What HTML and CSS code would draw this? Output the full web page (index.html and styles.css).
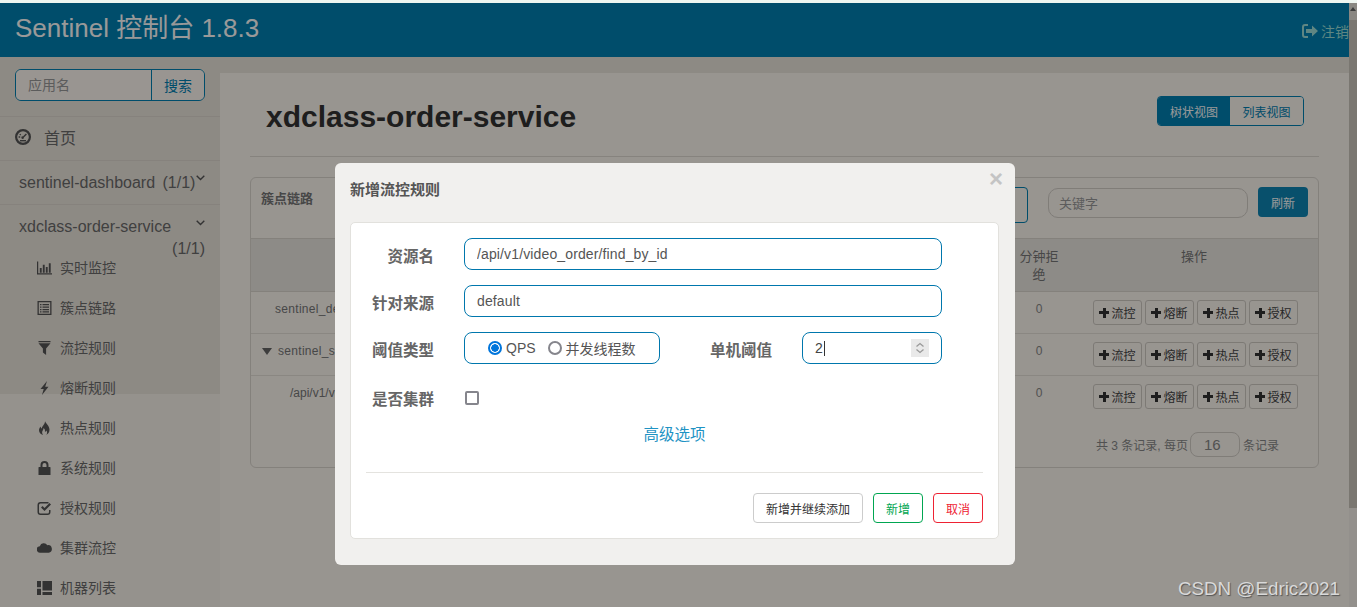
FILE: index.html
```html
<!DOCTYPE html>
<html>
<head>
<meta charset="utf-8">
<title>Sentinel 控制台</title>
<link rel="stylesheet" href="styles.css">
</head>
<body>
<div class="screen">
  <div class="page">
    <header class="topbar">
      <span class="brand">Sentinel 控制台 1.8.3</span>
      <span class="logout">
        <svg class="logout-icon" viewBox="0 0 16 14"><path d="M6 0H3a3 3 0 0 0-3 3v8a3 3 0 0 0 3 3h3v-2H3a1 1 0 0 1-1-1V3a1 1 0 0 1 1-1h3z"/><path d="M4 5h6V1.500L16 7l-6 5.500V9H4z"/></svg>
        注销
      </span>
    </header>

    <div class="layout">
      <aside class="sidebar">
        <div class="search">
          <input class="search-input" type="text" placeholder="应用名">
          <button class="search-btn">搜索</button>
        </div>
        <div class="side-home">
          <svg class="home-icon" viewBox="0 0 16 16"><path fill-rule="evenodd" d="M8 0a8 8 0 1 1 0 16A8 8 0 0 1 8 0zm0 2.200a5.800 5.800 0 1 0 0 11.600A5.800 5.800 0 0 0 8 2.200z"/><path d="M3.600 7.300h1.600v1.400H3.600zM5.200 4.700l1 .9-.9 1-1-.9zM10.900 4.400l1 1-3 3a1.300 1.300 0 1 1-1-1z"/><path d="M5 11h6v1.400H5z"/></svg>
          首页
        </div>
        <div class="side-app">
          <span class="side-app-wide">sentinel-dashboard (1/1)</span>
          <svg class="chev chev-up" viewBox="0 0 9 6"><path d="M.7.700 4.500 4.500 8.300.7"/></svg>
        </div>
        <div class="side-app side-app-open">
          <div class="side-app-name">
            <span>xdclass-order-service</span>
            <svg class="chev" viewBox="0 0 9 6"><path d="M.7.700 4.500 4.500 8.300.7"/></svg>
          </div>
          <div class="side-app-count">(1/1)</div>
        </div>
        <ul class="side-nav">
          <li><svg viewBox="0 0 16 14"><path d="M0 0h1.300v12.700H16V14H0zM3 7h2v5H3zM6.200 3.500h2V12h-2zM9.400 6h2v6h-2zM12.600 2h2v10h-2z"/></svg>实时监控</li>
          <li><svg viewBox="0 0 14 14"><path fill-rule="evenodd" d="M0 0h14v14H0zm1.300 1.300v11.400h11.400V1.300z"/><path d="M2.500 3h1.500v1.300H2.500zM5 3h6.500v1.300H5zM2.500 5.500h1.500v1.300H2.500zM5 5.500h6.500v1.300H5zM2.500 8h1.500v1.300H2.500zM5 8h6.500v1.300H5zM2.500 10.300h1.500v1.300H2.500zM5 10.300h6.500v1.300H5z"/></svg>簇点链路</li>
          <li><svg viewBox="0 0 14 14"><path d="M1 0h12v1.200H1zM1 2.200h12L8.600 7.500V14L5.400 11.500v-4z"/></svg>流控规则</li>
          <li><svg viewBox="0 0 14 14"><path d="M9.500 0 3 8h3.200L4.500 14 11 5.700H7.700z"/></svg>熔断规则</li>
          <li><svg viewBox="0 0 14 14"><path d="M7.500 0c.6 2.500 4.500 4.500 4.500 8.800 0 2.400-1.400 4.300-3.300 5.200 1-1.300 1.300-3 .2-4.500-.4 1-1 1.300-1.500 1.300.4-1.600-.2-3-1.400-3.800.2 1.800-1.400 2.800-1.400 4.500 0 1 .4 1.800 1 2.500C3 13.300 1.500 11.400 1.500 9.200c0-1.500.7-2.800 1.700-3.800 0 1 .4 1.700 1 2C4.800 4.700 7.800 3 7.500 0z"/></svg>热点规则</li>
          <li><svg viewBox="0 0 14 14"><path fill-rule="evenodd" d="M3 6V4a4 4 0 0 1 8 0v2h1.500a.5.500 0 0 1 .5.500V14H1V6.500a.5.500 0 0 1 .5-.5zm2 0h4V4a2 2 0 0 0-4 0z"/></svg>系统规则</li>
          <li><svg viewBox="0 0 14 14"><path d="M3 1h8v1.500H3A1.500 1.500 0 0 0 1.500 4v7A1.500 1.500 0 0 0 3 12.500h7a1.500 1.500 0 0 0 1.500-1.500V9H13v2a3 3 0 0 1-3 3H3a3 3 0 0 1-3-3V4a3 3 0 0 1 3-3z"/><path d="M3.500 6.500 5 5l2 2 5-5 1.500 1.500L7 10z"/></svg>授权规则</li>
          <li><svg viewBox="0 0 16 10"><path d="M3.500 10a3.500 3.500 0 0 1-.5-7A4.500 4.500 0 0 1 11 2a4 4 0 0 1 1.500 8z"/></svg>集群流控</li>
          <li><svg viewBox="0 0 15 14"><path d="M0 0h4v6.200H0zM0 7.700h4V14H0zM5.500 0H15v9.500H5.500zM5.500 11H15v3H5.500z"/></svg>机器列表</li>
        </ul>
      </aside>

      <main class="content">
        <div class="content-head">
          <h1 class="app-title">xdclass-order-service</h1>
          <div class="view-switch">
            <button class="view-btn view-btn-on">树状视图</button>
            <button class="view-btn">列表视图</button>
          </div>
        </div>

        <section class="panel">
          <div class="panel-head">
            <span class="panel-title">簇点链路</span>
            <div class="panel-tools">
              <div class="machine-select"></div>
              <input class="keyword" type="text" placeholder="关键字">
              <button class="refresh">刷新</button>
            </div>
          </div>
          <table class="rules">
            <colgroup>
              <col class="col-name"><col class="col-rest"><col class="col-reject"><col class="col-ops">
            </colgroup>
            <thead>
              <tr><th></th><th></th><th>分钟拒绝</th><th>操作</th></tr>
            </thead>
            <tbody>
              <tr>
                <td class="res">sentinel_de</td><td></td><td>0</td>
                <td><div class="ops"><button class="op"><i class="plus"></i>流控</button><button class="op"><i class="plus"></i>熔断</button><button class="op"><i class="plus"></i>热点</button><button class="op"><i class="plus"></i>授权</button></div></td>
              </tr>
              <tr>
                <td class="res res-tree"><i class="tri"></i>sentinel_s</td><td></td><td>0</td>
                <td><div class="ops"><button class="op"><i class="plus"></i>流控</button><button class="op"><i class="plus"></i>熔断</button><button class="op"><i class="plus"></i>热点</button><button class="op"><i class="plus"></i>授权</button></div></td>
              </tr>
              <tr class="last">
                <td class="res res-leaf">/api/v1/vi</td><td></td><td>0</td>
                <td><div class="ops"><button class="op"><i class="plus"></i>流控</button><button class="op"><i class="plus"></i>熔断</button><button class="op"><i class="plus"></i>热点</button><button class="op"><i class="plus"></i>授权</button></div></td>
              </tr>
            </tbody>
          </table>
          <div class="pager">共 3 条记录, 每页<input class="pager-size" type="text" value="16">条记录</div>
        </section>
      </main>

      <div class="scrollbar"><div class="scroll-thumb"><span class="scroll-up"></span></div></div>
    </div>

    <div class="backdrop"></div>

    <div class="modal">
      <div class="modal-title">新增流控规则</div>
      <span class="modal-close">×</span>
      <div class="modal-card">
        <div class="form-row">
          <label class="form-label">资源名</label>
          <input class="field field-wide" type="text" value="/api/v1/video_order/find_by_id">
        </div>
        <div class="form-row">
          <label class="form-label">针对来源</label>
          <input class="field field-wide" type="text" value="default">
        </div>
        <div class="form-row">
          <label class="form-label">阈值类型</label>
          <div class="field radios">
            <label class="radio"><input type="radio" name="grade" checked>QPS</label>
            <label class="radio"><input type="radio" name="grade">并发线程数</label>
          </div>
          <label class="form-label form-label-side">单机阈值</label>
          <div class="field count">
            <span>2</span><span class="caret"></span>
            <span class="spin"><svg viewBox="0 0 18 18"><path d="M5.500 7.500 9 4.500l3.500 3M5.500 10.500 9 13.500l3.500-3"/></svg></span>
          </div>
        </div>
        <div class="form-row form-row-check">
          <label class="form-label">是否集群</label>
          <input class="check" type="checkbox">
        </div>
        <div class="advanced">高级选项</div>
        <div class="modal-foot">
          <button class="foot-btn foot-more">新增并继续添加</button>
          <button class="foot-btn foot-ok">新增</button>
          <button class="foot-btn foot-cancel">取消</button>
        </div>
      </div>
    </div>

    <div class="mark">CSDN @Edric2021</div>
  </div>
</div>
</body>
</html>
```
FILE: styles.css
```css
* { box-sizing: border-box; }

html, body {
  margin: 0;
  height: 607px;
  overflow: hidden;
}
body {
  background: #eef6f1;
  padding-top: 3px;
  font-family: "Liberation Sans", "Noto Sans CJK SC", sans-serif;
  color: #777;
}
button, input {
  font-family: inherit;
}
.screen { height: 604px; }
.page {
  position: relative;
  height: 604px;
  overflow: hidden;
  background: #ece6dd;
}

/* top bar */
.topbar {
  display: flex;
  justify-content: space-between;
  align-items: center;
  height: 54px;
  padding: 0 0 0 15px;
  background: #0080b2;
  color: #fff;
}
.brand { font-size: 26px; margin-top: -10px; }
.logout {
  display: flex;
  align-items: center;
  gap: 3px;
  width: 55px;
  white-space: nowrap;
  overflow: hidden;
  margin-top: 1px;
  font-size: 14px;
  color: #9fe0da;
}
.logout-icon { width: 16px; height: 14px; fill: #9fe0da; flex: none; }

.layout {
  display: flex;
  height: 550px;
}

/* sidebar */
.sidebar {
  width: 220px;
  flex: none;
  padding-top: 12px;
  background: linear-gradient(#ece6dd 337px, #f9f4ec 337px);
}
.search {
  display: flex;
  height: 32px;
  margin: 0 15px 15px;
  border: 1px solid #0080b2;
  border-radius: 6px;
  overflow: hidden;
}
.search-input {
  flex: 1;
  min-width: 0;
  padding: 0 12px;
  border: 0;
  outline: 0;
  background: #fff8f2;
  font-size: 14px;
}
.search-input::placeholder { color: #999; }
.search-btn {
  width: 53px;
  border: 0;
  border-left: 1px solid #0080b2;
  background: #fff8f2;
  color: #0080b2;
  font-size: 14px;
  padding: 0;
}
.side-home {
  display: flex;
  align-items: center;
  gap: 13px;
  height: 44px;
  padding: 0 0 4px 15px;
  border-top: 1px solid #e0d9d0;
  font-size: 16px;
  color: #6b6b6b;
}
.home-icon { width: 16px; height: 16px; fill: #555; }
.side-app {
  display: flex;
  justify-content: space-between;
  height: 44px;
  padding: 11px 15px 0 19px;
  border-top: 1px solid #e0d9d0;
  font-size: 16px;
  line-height: 22px;
  color: #6b6b6b;
}
.side-app-wide { word-spacing: 3px; }
.side-app-open {
  display: block;
  height: 54px;
}
.side-app-name {
  display: flex;
  justify-content: space-between;
}
.side-app-count { text-align: right; line-height: 21px; }
.chev {
  width: 9px;
  height: 6px;
  margin-top: 4px;
  fill: none;
  stroke: #555;
  stroke-width: 1.400;
}
.chev-up { margin-top: 3px; }
.side-nav {
  display: grid;
  row-gap: 20px;
  margin: 0;
  padding: 0 0 0 37px;
  list-style: none;
  font-size: 14px;
  line-height: 20px;
}
.side-nav li {
  display: flex;
  align-items: center;
  height: 20px;
  color: #6b6b6b;
}
.side-nav svg {
  width: 15px;
  height: 14px;
  margin-right: 8px;
  fill: #555;
  flex: none;
}

/* main area */
.content {
  flex: 1;
  margin-top: 16px;
  padding: 0 30px;
  background: #fdf8f1;
}
.content-head {
  display: flex;
  justify-content: space-between;
  height: 84px;
  padding: 23px 15px 0 16px;
  border-bottom: 1px solid #e0dbd3;
}
.app-title {
  margin: 3px 0 0;
  font-size: 30px;
  line-height: 36px;
  color: #333;
}
.view-switch {
  display: flex;
  height: 30px;
  border: 1px solid #0080b2;
  border-radius: 4px;
  overflow: hidden;
}
.view-btn {
  width: 73px;
  padding: 0;
  border: 0;
  background: #fdf8f1;
  color: #0080b2;
  font-size: 12px;
}
.view-btn-on {
  width: 72px;
  background: #0080b2;
  color: #fff;
}

/* panel with the rule table */
.panel {
  height: 291px;
  margin-top: 20px;
  border: 1px solid #dcd7cf;
  border-radius: 6px;
}
.panel-head {
  display: flex;
  justify-content: space-between;
  height: 60px;
  padding: 9px 10px 0;
}
.panel-title {
  margin-top: 1px;
  font-size: 13px;
  font-weight: bold;
  color: #777;
}
.panel-tools {
  display: flex;
  gap: 10px;
  align-items: flex-start;
}
.machine-select {
  width: 120px;
  height: 36px;
  margin-right: 10px;
  border: 1px solid #0080b2;
  border-radius: 4px;
}
.keyword {
  width: 200px;
  height: 30px;
  margin-top: 1px;
  padding: 0 10px;
  border: 1px solid #d5d0c8;
  border-radius: 10px;
  outline: 0;
  background: #fdf8f1;
  font-size: 13px;
}
.keyword::placeholder { color: #999; }
.refresh {
  width: 50px;
  height: 30px;
  padding: 0;
  border: 0;
  border-radius: 4px;
  background: #0e86b4;
  color: #fff;
  font-size: 12px;
}
.rules {
  width: 100%;
  table-layout: fixed;
  border-collapse: separate;
  border-spacing: 0;
  font-size: 12px;
}
.col-name { width: 387px; }
.col-rest { width: 370px; }
.col-reject { width: 62px; }
.col-ops { width: 248px; }
.rules th {
  height: 54px;
  padding: 9px 8px 0;
  vertical-align: top;
  border-top: 1px solid #dcd7cf;
  border-bottom: 1px solid #dcd7cf;
  background: #ece8e1;
  font-size: 13px;
  font-weight: normal;
  line-height: 18px;
  color: #777;
}
.rules td {
  height: 42px;
  padding: 10px 0 0;
  vertical-align: top;
  text-align: center;
  border-bottom: 1px solid #e6e1d9;
  color: #888;
}
.rules tr.last td { border-bottom: 0; }
.rules td.res {
  padding-left: 24px;
  text-align: left;
  letter-spacing: .3px;
  color: #777;
}
.rules td.res-tree { padding-left: 11px; }
.rules td.res-leaf { padding-left: 39px; letter-spacing: 0; }
.tri {
  display: inline-block;
  width: 0;
  height: 0;
  margin-right: 6px;
  border-top: 7px solid #666;
  border-left: 5px solid transparent;
  border-right: 5px solid transparent;
}
.ops {
  display: flex;
  gap: 3px;
  margin-top: -2px;
  padding-left: 23px;
}
.op {
  display: flex;
  align-items: center;
  justify-content: center;
  gap: 2px;
  width: 49px;
  height: 25px;
  padding: 0;
  border: 1px solid #d0ccc4;
  border-radius: 3px;
  background: #fdf8f1;
  color: #444;
  font-size: 12px;
}
.plus {
  position: relative;
  width: 10px;
  height: 10px;
  background:
    linear-gradient(#333, #333) center / 10px 3px no-repeat,
    linear-gradient(#333, #333) center / 3px 10px no-repeat;
}
.pager {
  display: flex;
  align-items: center;
  justify-content: flex-end;
  margin-top: 14px;
  padding-right: 39px;
  font-size: 12px;
  color: #888;
}
.pager-size {
  width: 50px;
  height: 25px;
  margin: 0 3px 0 2px;
  padding: 0 0 0 13px;
  border: 1px solid #d5d0c8;
  border-radius: 8px;
  outline: 0;
  background: #fdf8f1;
  color: #888;
  font-size: 15px;
}

/* scrollbar */
.scrollbar {
  width: 8px;
  flex: none;
  background: #f6f1ea;
}
.scroll-thumb {
  height: 505px;
  margin-top: -54px;
  background: #cbc6bc;
}
.scroll-up {
  display: block;
  width: 8px;
  height: 17px;
  padding: 4px 0 0 1px;
  background: #e6e1d9;
}
.scroll-up::before {
  content: "";
  display: block;
  width: 0;
  border-bottom: 4px solid #666;
  border-left: 3px solid transparent;
  border-right: 3px solid transparent;
}

.backdrop {
  position: absolute;
  inset: 0;
  background: rgba(0, 0, 0, .4);
}

/* dialog */
.modal {
  position: absolute;
  left: 335px;
  top: 160px;
  width: 680px;
  height: 402px;
  padding: 59px 16px 0 15px;
  background: #f1f0ee;
  border-radius: 6px;
}
.modal-title {
  position: absolute;
  left: 15px;
  top: 15px;
  font-size: 15px;
  font-weight: bold;
  color: #555;
}
.modal-close {
  position: absolute;
  right: 12px;
  top: 2px;
  font-size: 24px;
  font-weight: bold;
  line-height: 28px;
  color: #c4c4c4;
}
.modal-card {
  height: 317px;
  padding-top: 15px;
  background: #fff;
  border: 1px solid #e2e1dd;
  border-radius: 5px;
}
.form-row {
  display: flex;
  align-items: center;
  height: 32px;
  margin-bottom: 15px;
}
.form-row-check { margin: 18px 0 0; }
.form-row-check .form-label { padding-top: 0; }
.form-label {
  width: 83px;
  margin-right: 30px;
  padding-top: 2px;
  text-align: right;
  font-size: 15.500px;
  font-weight: bold;
  color: #666;
  white-space: nowrap;
}
.form-label-side { width: 112px; }
.field {
  height: 32px;
  border: 1px solid #0077ad;
  border-radius: 8px;
  outline: 0;
  font-size: 14px;
  color: #555;
}
.field-wide {
  width: 478px;
  padding: 0 12px;
  letter-spacing: .13px;
}
.radios {
  display: flex;
  align-items: center;
  gap: 12px;
  width: 196px;
  padding-left: 23px;
}
.radio {
  display: flex;
  align-items: center;
  gap: 4px;
}
.radio input {
  appearance: none;
  width: 14px;
  height: 14px;
  margin: 0;
  border: 2px solid #85858c;
  border-radius: 50%;
  background: #fff;
}
.radio input:checked {
  border-color: #0075db;
  background: radial-gradient(circle, #0075db 3.500px, #fff 4px);
}
.count {
  position: relative;
  display: flex;
  align-items: center;
  width: 140px;
  padding-left: 12px;
  color: #444;
}
.caret {
  width: 1px;
  height: 15px;
  margin-left: 1px;
  background: #333;
}
.spin {
  position: absolute;
  right: 12px;
  top: 6px;
  width: 18px;
  height: 18px;
  background: #e9e9e9;
}
.spin svg {
  display: block;
  fill: none;
  stroke: #999;
  stroke-width: 1.300;
}
.check {
  appearance: none;
  width: 14px;
  height: 14px;
  margin: 0 0 0 1px;
  border: 2px solid #85858c;
  border-radius: 2px;
  background: #fff;
}
.advanced {
  margin-top: 10px;
  text-align: center;
  font-size: 15.500px;
  line-height: 22px;
  color: #1f93c4;
}
.modal-foot {
  display: flex;
  justify-content: flex-end;
  gap: 10px;
  margin: 26px 15px 0;
  padding-top: 20px;
  border-top: 1px solid #e4e3df;
}
.foot-btn {
  height: 30px;
  padding: 0;
  background: #fff;
  border: 1px solid #ccc;
  border-radius: 4px;
  font-size: 12px;
}
.foot-more { width: 110px; color: #333; }
.foot-ok { width: 50px; border-color: #00a651; color: #00a651; }
.foot-cancel { width: 50px; border-color: #ee2233; color: #ee2233; }

.mark {
  position: absolute;
  right: 17px;
  bottom: 7px;
  font-size: 18.800px;
  color: #d9d9d9;
  text-shadow: 1px 1px 1px #555;
}
```
